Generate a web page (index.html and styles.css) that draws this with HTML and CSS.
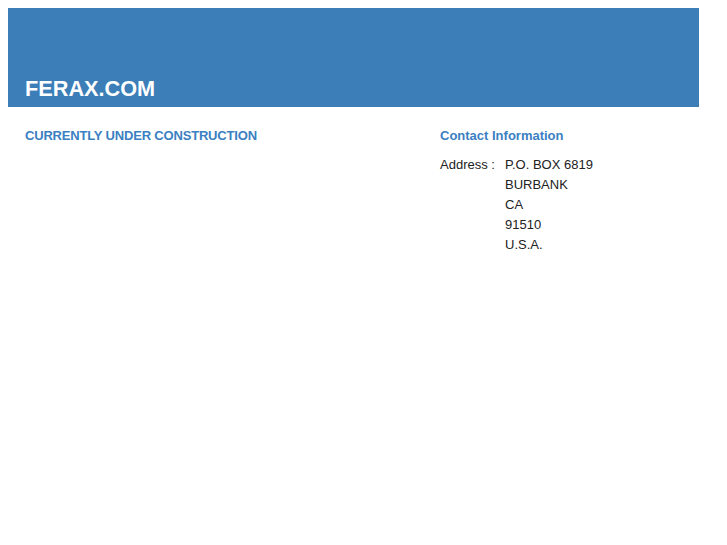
FILE: index.html
```html
<!DOCTYPE html>
<html>
<head>
<meta charset="utf-8">
<title>ferax.com</title>
<link rel="stylesheet" href="styles.css">
</head>
<body>
<div class="page">
  <header class="header">
    <h1 class="title">FERAX.COM</h1>
  </header>
  <main class="content">
    <section class="left">
      <h2 class="heading heading-caps">CURRENTLY UNDER CONSTRUCTION</h2>
    </section>
    <section class="right">
      <h2 class="heading">Contact Information</h2>
      <div class="address">
        <div class="label">Address :</div>
        <div class="lines">
          <div>P.O. BOX 6819</div>
          <div>BURBANK</div>
          <div>CA</div>
          <div>91510</div>
          <div>U.S.A.</div>
        </div>
      </div>
    </section>
  </main>
</div>
</body>
</html>
```
FILE: styles.css
```css
html, body {
  margin: 0;
  padding: 0;
  background: #ffffff;
}
body {
  padding: 8px;
  font-family: "Liberation Sans", Arial, Helvetica, sans-serif;
  color: #222222;
}
.page {
  width: 691px;
}
.header {
  background: #3b7eb8;
  height: 99px;
  display: flex;
  align-items: flex-end;
  padding: 0 17px;
  box-sizing: border-box;
}
.title {
  margin: 0 0 5px 0;
  font-size: 21.7px;
  line-height: 26px;
  font-weight: bold;
  color: #ffffff;
}
.content {
  display: flex;
  padding: 19px 17px 0;
}
.left {
  width: 415px;
}
.right {
  flex: 1;
}
.heading {
  margin: 0;
  font-size: 13px;
  line-height: 20px;
  font-weight: bold;
  color: #3b80c2;
}
.heading-caps {
  letter-spacing: -0.18px;
}
.address {
  display: flex;
  margin-top: 9px;
  font-size: 13px;
  line-height: 20px;
  color: #222222;
}
.label {
  width: 65px;
}
```
